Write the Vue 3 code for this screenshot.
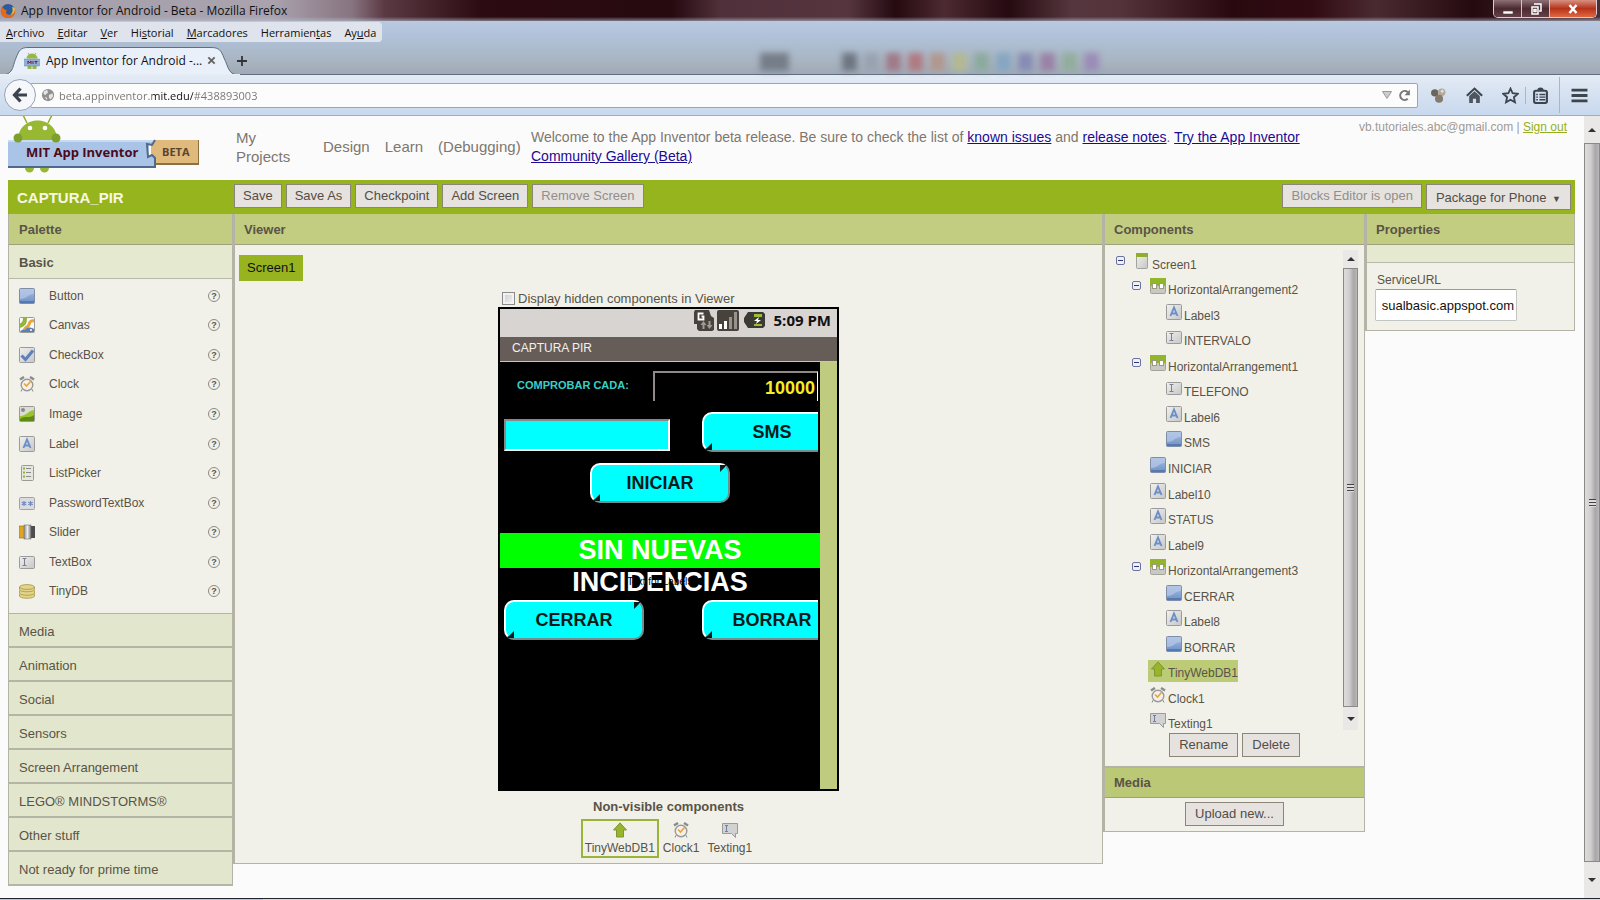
<template>
    <svg class="sprite" aria-hidden="true">
        <defs>
            <linearGradient id="gBlue" x1="0" y1="0" x2="0" y2="1">
                <stop offset="0" stop-color="#a9c0e2" />
                <stop offset="1" stop-color="#6d8fc4" />
            </linearGradient>
            <linearGradient id="gGrey" x1="0" y1="0" x2="1" y2="1">
                <stop offset="0" stop-color="#f1f1ef" />
                <stop offset="1" stop-color="#c6c6c6" />
            </linearGradient>
            <linearGradient id="gSlide" x1="0" y1="0" x2="1" y2="0">
                <stop offset="0" stop-color="#8c8c8c" />
                <stop offset="0.5" stop-color="#ececec" />
                <stop offset="1" stop-color="#777" />
            </linearGradient>
        </defs>
        <symbol id="i-button" viewBox="0 0 16 16">
            <rect x="0.5" y="0.5" width="15" height="15" rx="1" fill="url(#gBlue)" stroke="#7f8da6" />
            <path d="M1 1h14v5C9 6 8 11 1 11z" fill="#b6c9e8" opacity="0.7" />
            <path d="M1 13h14v2H1z" fill="#5579b5" />
        </symbol>
        <symbol id="i-canvas" viewBox="0 0 16 16">
            <rect x="0.5" y="0.5" width="15" height="15" rx="1" fill="#fbfaf4" stroke="#9b9b96" />
            <path d="M5 1c0 4-1 5-4 7M7 1c0 5-1 7-6 9" stroke="#8db33a" stroke-width="2" fill="none" />
            <path d="M15 4c-5-1-4 3-6 5s-3 1-4 5" stroke="#eaa23c" stroke-width="3" fill="none" />
            <path d="M1 15c2-4 5-1 6-3s5-2 8 0v3z" fill="#5a7fbb" />
            <circle cx="12" cy="13" r="1" fill="#fff" />
        </symbol>
        <symbol id="i-check" viewBox="0 0 16 16">
            <rect x="0.5" y="0.5" width="15" height="15" rx="1" fill="url(#gGrey)" stroke="#9b9b9b" />
            <path d="M2.500 8.500L6.500 12.500L14 3.500" stroke="#5c7fc0" stroke-width="3" fill="none" />
        </symbol>
        <symbol id="i-clock" viewBox="0 0 16 16">
            <path d="M1 3.500L5 1M15 3.500L11 1" stroke="#8c8c8c" stroke-width="2.500" />
            <path d="M3.500 12.500L2 15.500M12.500 12.500L14 15.500" stroke="#8c8c8c" />
            <circle cx="8" cy="9" r="5.800" fill="#f4f1ea" stroke="#9a9a9a" stroke-width="1.400" />
            <path d="M5 7.500L7.500 10L11.500 5.500" stroke="#e8a33a" stroke-width="1.600" fill="none" />
        </symbol>
        <symbol id="i-image" viewBox="0 0 16 16">
            <rect x="0.500" y="0.500" width="15" height="15" rx="1" fill="#dcdcd6" stroke="#9b9b96" />
            <path d="M1 10C7 10 9 5 15 4v11H1z" fill="#9ac42c" />
            <path d="M1 13C6 9 10 13 15 9v6H1z" fill="#5f8a14" />
            <circle cx="4" cy="4" r="2" fill="#8a8a8a" />
        </symbol>
        <symbol id="i-label" viewBox="0 0 16 16">
            <rect x="0.500" y="0.500" width="15" height="15" rx="1" fill="url(#gGrey)" stroke="#9b9b9b" />
            <path d="M4.500 12L8 3.500L11.500 12M5.700 9.500h4.600" stroke="#6c8fc9" stroke-width="1.900" fill="none" />
        </symbol>
        <symbol id="i-list" viewBox="0 0 16 16">
            <rect x="2.500" y="0.500" width="12" height="15" rx="1" fill="#e6e6e0" stroke="#9b9b96" />
            <path d="M7 3.500h5M7 7.500h5M7 11.500h5" stroke="#8b8b8b" />
            <path d="M4 3.500h2M4 7.500h2M4 11.500h2" stroke="#8db33a" stroke-width="2" />
        </symbol>
        <symbol id="i-password" viewBox="0 0 16 16">
            <rect x="0.500" y="2.500" width="15" height="12" rx="1" fill="#d9dbdf" stroke="#a3a3a3" />
            <path d="M5 6v5M2.800 7.200l4.400 2.600M7.200 7.200L2.800 9.800M11.500 6v5M9.300 7.200l4.400 2.600M13.700 7.200L9.300 9.800" stroke="#6c87bd" stroke-width="1.100" />
        </symbol>
        <symbol id="i-slider" viewBox="0 0 16 16">
            <rect x="0" y="2" width="6" height="12" fill="#dda61c" stroke="#9a7410" stroke-width="0.600" />
            <rect x="11" y="2" width="5" height="12" fill="#4d4d4d" />
            <rect x="5" y="1" width="7" height="14" fill="url(#gSlide)" stroke="#666" stroke-width="0.500" />
        </symbol>
        <symbol id="i-textbox" viewBox="0 0 16 16">
            <rect x="0.500" y="2.500" width="15" height="12" rx="1" fill="url(#gGrey)" stroke="#9b9b9b" />
            <path d="M3.500 4.500h4M5.500 4.500v7M3.500 11.500h4" stroke="#7a7f95" />
        </symbol>
        <symbol id="i-tinydb" viewBox="0 0 16 16">
            <g fill="#e3d488" stroke="#a8964a" stroke-width="0.800">
                <path d="M0.500 11v2c0 3 15 3 15 0v-2" />
                <path d="M0.500 7.500v2.500c0 3 15 3 15 0V7.500" />
                <path d="M0.500 4v2.500c0 3 15 3 15 0V4" />
                <ellipse cx="8" cy="4" rx="7.500" ry="2.400" />
            </g>
        </symbol>
        <symbol id="i-screen" viewBox="0 0 16 16">
            <rect x="2.500" y="0.500" width="11" height="15" rx="1" fill="url(#gGrey)" stroke="#a3a39b" />
            <path d="M2 0h12v4H2z" fill="#8fae30" />
        </symbol>
        <symbol id="i-arrange" viewBox="0 0 16 16">
            <rect x="0.500" y="0.500" width="15" height="15" rx="1" fill="#c9c9c4" stroke="#a3a39b" />
            <path d="M0 0h16v8H0z" fill="#93b52a" />
            <rect x="2.500" y="5.500" width="4" height="5" fill="#fff" stroke="#9a9a80" />
            <rect x="9.500" y="5.500" width="4" height="5" fill="#fff" stroke="#9a9a80" />
        </symbol>
        <symbol id="i-webdb" viewBox="0 0 16 16">
            <path d="M8 0.800L14.500 8H11.500V15H4.500V8H1.500z" fill="#98b42a" stroke="#7f9636" />
        </symbol>
        <symbol id="i-texting" viewBox="0 0 16 16">
            <path d="M0.500 1.500h15v10h-2v4l-4-4h-9z" fill="#d2d2d2" stroke="#9b9b9b" />
            <path d="M3 3.500h3M4.500 3.500v6M3 9.500h3" stroke="#6f7fa8" />
        </symbol>
    </svg>

    <div class="window">
        <header class="chrome">
            <div class="titlebar">
                <svg class="firefox" viewBox="0 0 16 16">
                    <circle cx="8" cy="8" r="7" fill="#2b5c9e" />
                    <path d="M2 3c-3 5-1 12 6 12 5 0 8-4 7-9 0 3-2 6-5 6-4 0-5-3-3-5C4 7 3 5 2 3z" fill="#e5691b" />
                    <path d="M15 6c0 3-2 6-5 6 3-2 3-5 2-8 2 0 3 1 3 2z" fill="#f6b83c" />
                </svg>
                <span class="title">App Inventor for Android - Beta - Mozilla Firefox</span>
                <div class="win-controls">
                    <button aria-label="Minimizar"><svg viewBox="0 0 14 12"><path d="M2 8h10v3H2z" fill="#fff" stroke="#444" stroke-width="0.600" /></svg></button>
                    <button aria-label="Restaurar"><svg viewBox="0 0 14 12"><path d="M5 1h7v7h-2M3 4h6v7H3zM5 6.500h2v2H5z" fill="none" stroke="#fff" stroke-width="1.500" /></svg></button>
                    <button class="close" aria-label="Cerrar ventana"><svg viewBox="0 0 14 12"><path d="M3.500 2l7 8M10.500 2l-7 8" stroke="#fff" stroke-width="2.500" /></svg></button>
                </div>
            </div>

            <nav class="menubar">
                <button v-for="item in menu" :key="item.join('')">{{ item[0] }}<u>{{ item[1] }}</u>{{ item[2] }}</button>
            </nav>

            <div class="tabstrip">
                <div class="glass" aria-hidden="true">
                    <i class="glass-box"></i>
                    <i
                        v-for="color in swatches"
                        :key="color"
                        class="swatch"
                        :style="{ backgroundColor: color }"
                    ></i>
                </div>
                <svg class="tab-shape" viewBox="0 0 240 28" preserveAspectRatio="none">
                    <path d="M0 28C14 28 12 20 16 11C19 3 21 0.500 28 0.500H211C219 0.500 221 3 224 11C229 21 228 28 240 28z" fill="#e9f0f9" stroke="#5f6e82" />
                    <path d="M0 28H240" stroke="#e6edf6" stroke-width="2" />
                </svg>
                <div class="tab">
                    <svg class="favicon" viewBox="0 0 16 16">
                        <path d="M3 5a5 4 0 0 1 10 0zM4 13h3v3H4zM9 13h3v3H9zM4 0l1.500 2M12 0l-1.500 2" fill="#97b83c" stroke="#97b83c" />
                        <rect x="0.500" y="6" width="15" height="7" fill="#8fafd8" stroke="#6b84ab" stroke-width="0.500" />
                        <path d="M4 11V8l1.500 2L7 8v3M9 8v3M10.500 8.500h3M12 8.500V11" stroke="#713" stroke-width="0.900" fill="none" />
                    </svg>
                    <span>App Inventor for Android -...</span>
                    <button aria-label="Cerrar pestaña"><svg viewBox="0 0 10 10"><path d="M1.500 1.500l7 7M8.500 1.500l-7 7" stroke="#666" stroke-width="2.200" /></svg></button>
                </div>
                <button class="new-tab" aria-label="Nueva pestaña"><svg viewBox="0 0 12 12"><path d="M6 1v10M1 6h10" stroke="#333" stroke-width="1.800" /></svg></button>
            </div>

            <div class="navbar">
                <button class="back" aria-label="Atrás"><svg viewBox="0 0 16 16"><path d="M8.500 1.500L2.500 8l6 6.500M3 8h12" stroke="#3d444d" stroke-width="3.200" fill="none" /></svg></button>
                <div class="urlbar">
                    <svg class="globe" viewBox="0 0 16 16">
                        <circle cx="8" cy="8" r="7" fill="#8e8e8e" />
                        <path d="M3 4l4-2 1 3-3 3-2-1zM9 8l4-2 1 3-3 4-2-2zM4 10l3 1v3z" fill="#e4e4e4" />
                    </svg>
                    <input v-model="url" class="url" aria-label="Dirección" />
                    <svg class="drop" viewBox="0 0 10 8"><path d="M0.500 0.500h9L5 7.500z" fill="#ccc" stroke="#999" /></svg>
                    <svg class="reload" viewBox="0 0 14 14"><path d="M10.500 10.500a4.800 4.800 0 1 1 0-7" stroke="#777" stroke-width="2.200" fill="none" /><path d="M12.800 0.500v6.300H7z" fill="#777" /></svg>
                </div>
                <div class="tools">
                    <button aria-label="Complemento"><svg viewBox="0 0 16 16"><circle cx="4.500" cy="5.500" r="3.500" fill="#6b645c" /><circle cx="11" cy="5" r="3.600" fill="#b3aa9d" /><circle cx="8.500" cy="11" r="3.800" fill="#857a6c" /><circle cx="11.500" cy="4" r="1.300" fill="#e6e1d8" /></svg></button>
                    <button aria-label="Inicio"><svg viewBox="0 0 16 16"><path d="M0.800 8.200L8 1.500l7.200 6.700" stroke="#3d444d" stroke-width="2" fill="none" /><path d="M3 8.500L8 4l5 4.500V15H9.500v-4h-3v4H3z" fill="#4d555f" /></svg></button>
                    <button aria-label="Marcar"><svg viewBox="0 0 16 16"><path d="M8 1.500l2 4.400 4.800.5-3.600 3.200 1 4.800L8 12l-4.200 2.400 1-4.800L1.200 6.400 6 5.900z" fill="none" stroke="#3d444d" stroke-width="1.700" /></svg></button>
                    <button aria-label="Marcadores" class="split"><svg viewBox="0 0 16 16"><rect x="2" y="3.500" width="12" height="11.500" rx="1.500" fill="none" stroke="#3d444d" stroke-width="2" /><path d="M5 3.500a3 3 0 0 1 6 0z" fill="#3d444d" /><path d="M4 7h1.500M7 7h5.500M4 9.500h1.500M7 9.500h5.500M4 12h1.500M7 12h5.500" stroke="#3d444d" stroke-width="1.300" /></svg></button>
                    <button aria-label="Menú" class="menu-btn"><svg viewBox="0 0 16 16"><path d="M0.500 3h15M0.500 8h15M0.500 13h15" stroke="#3d444d" stroke-width="2.600" /></svg></button>
                </div>
            </div>
        </header>

        <div class="page">
            <main class="content">
                <div class="masthead">
                    <svg class="logo" viewBox="0 0 191 59" role="img" aria-label="MIT App Inventor Beta">
                        <path d="M15 -1l4 8M44 -1l-4 8" stroke="#8fae36" stroke-width="1.500" />
                        <path d="M10 24C10 -2 49 -2 49 24z" fill="#97b832" />
                        <circle cx="22" cy="12" r="2.300" fill="#fff" />
                        <circle cx="37" cy="12" r="2.300" fill="#fff" />
                        <path d="M17 46h9v6a4.500 4.500 0 0 1-9 0zM32 46h9v6a4.500 4.500 0 0 1-9 0z" fill="#97b832" />
                        <path d="M143 24h48v24h-48z" fill="#dfba7c" />
                        <path d="M143 48h48V24" fill="none" stroke="#8c7040" stroke-width="2" />
                        <path d="M0 24h147l-2 4-4 0-1 12 5-1 3 4v9H0z" fill="#a9c4e6" />
                        <path d="M0 25h146" stroke="#c6daf2" stroke-width="2" />
                        <path d="M0 51h147V42l-3-3-4 2-1-13 5 1 3-5" fill="none" stroke="#51698c" stroke-width="2" />
                        <circle cx="10" cy="22" r="4.500" fill="#7f9f2c" />
                        <circle cx="48" cy="22" r="4.500" fill="#7f9f2c" />
                        <text x="18" y="41" class="logo-name">MIT App Inventor</text>
                        <text x="154" y="40" class="logo-beta">BETA</text>
                    </svg>
                    <nav class="links">
                        <a href="#" class="my-projects">My Projects</a>
                        <a href="#">Design</a>
                        <a href="#">Learn</a>
                        <a href="#">(Debugging)</a>
                    </nav>
                    <p class="welcome">
                        Welcome to the App Inventor beta release. Be sure to check the list of
                        <a href="#">known issues</a> and <a href="#">release notes</a>.
                        <a href="#">Try the App Inventor Community Gallery (Beta)</a>
                    </p>
                    <p class="account">vb.tutoriales.abc@gmail.com | <a href="#">Sign out</a></p>
                </div>

                <div class="toolbar">
                    <h1>CAPTURA_PIR</h1>
                    <button class="btn">Save</button>
                    <button class="btn">Save As</button>
                    <button class="btn">Checkpoint</button>
                    <button class="btn">Add Screen</button>
                    <button class="btn" disabled>Remove Screen</button>
                    <button class="btn push" disabled>Blocks Editor is open</button>
                    <button class="btn package">Package for Phone <small>▼</small></button>
                </div>

                <div class="columns">
                    <section class="palette">
                        <h2>Palette</h2>
                        <h3>Basic</h3>
                        <ul class="palette-items">
                            <li v-for="item in basic" :key="item.name">
                                <svg class="icon"><use :href="'#i-' + item.icon" /></svg>
                                <span>{{ item.name }}</span>
                                <button class="help" :aria-label="'Help for ' + item.name">?</button>
                            </li>
                        </ul>
                        <button v-for="name in categories" :key="name" class="category">{{ name }}</button>
                    </section>

                    <section class="viewer">
                        <h2>Viewer</h2>
                        <button class="screen-tab">Screen1</button>
                        <div class="mock">
                            <label class="hidden-toggle">
                                <input v-model="showHidden" type="checkbox" />
                                Display hidden components in Viewer
                            </label>
                            <div class="phone">
                                <div class="phone-status">
                                    <svg class="status-3g" viewBox="0 0 21 21">
                                        <path d="M2 0h14l2 6 3 2v12l-2 1H6l-2-2v-5H1V2z" fill="#48423d" />
                                        <path d="M10.500 3.500h-5v6h5v-3h-2" fill="none" stroke="#fff" stroke-width="1.800" />
                                        <path d="M9.500 19v-4H7.500l3-4 3 4h-2v4zM15.500 11v4h-2l3 4 3-4h-2v-4z" fill="#a09a94" />
                                    </svg>
                                    <svg class="status-signal" viewBox="0 0 22 21">
                                        <rect width="22" height="21" rx="2" fill="#48423d" />
                                        <path d="M2 14h3v5H2zM7 11h3v8H7z" fill="#fff" />
                                        <path d="M12 7h3v12h-3zM17 2h3v17h-3z" fill="#98928c" />
                                    </svg>
                                    <svg class="status-battery" viewBox="0 0 21 16">
                                        <path d="M4 0h15l2 2v12l-2 2H4l-2-3L0 10V6l2-3z" fill="#3c3a34" />
                                        <path d="M10 2h8v3h-8zM10 12h8v2h-8z" fill="#9bbd35" />
                                        <path d="M15 5l-5 4h3l-1 3 5-4h-3z" fill="#fff" />
                                    </svg>
                                    <b>5:09 PM</b>
                                </div>
                                <div class="phone-title">CAPTURA PIR</div>
                                <div class="phone-body">
                                    <div class="phone-screen">
                                        <div class="line interval">
                                            <label for="intervalo">COMPROBAR CADA:</label>
                                            <input id="intervalo" v-model="interval" />
                                        </div>
                                        <div class="line sms">
                                            <input v-model="phone" aria-label="TELEFONO" />
                                            <button class="app-btn">SMS</button>
                                        </div>
                                        <div class="line start">
                                            <button class="app-btn">INICIAR</button>
                                        </div>
                                        <div class="state">SIN NUEVAS INCIDENCIAS</div>
                                        <div class="label9">Text for Label9</div>
                                        <div class="line actions">
                                            <button class="app-btn">CERRAR</button>
                                            <button class="app-btn">BORRAR</button>
                                        </div>
                                    </div>
                                </div>
                            </div>
                            <h4>Non-visible components</h4>
                            <div class="nonvisible">
                                <div v-for="item in nonVisible" :key="item.name" class="nv" :class="{ active: item.name === selected }">
                                    <svg class="icon"><use :href="'#i-' + item.icon" /></svg>
                                    <span>{{ item.name }}</span>
                                </div>
                            </div>
                        </div>
                    </section>

                    <section class="components">
                        <h2>Components</h2>
                        <div class="tree-wrap">
                            <ul class="tree">
                                <li v-for="node in tree" :key="node.name" :class="'depth-' + node.depth">
                                    <button v-if="node.open" class="fold" :aria-label="'Collapse ' + node.name"></button>
                                    <span class="node" :class="{ selected: node.name === selected }">
                                        <svg class="icon"><use :href="'#i-' + node.icon" /></svg>
                                        <span>{{ node.name }}</span>
                                    </span>
                                </li>
                            </ul>
                            <div class="scrollbar">
                                <i class="arrow up"></i>
                                <div class="thumb"><i class="grip"></i></div>
                                <i class="arrow down"></i>
                            </div>
                        </div>
                        <div class="tree-actions">
                            <button class="btn">Rename</button>
                            <button class="btn">Delete</button>
                        </div>
                        <h2 class="media">Media</h2>
                        <div class="upload"><button class="btn">Upload new...</button></div>
                    </section>

                    <section class="properties">
                        <h2>Properties</h2>
                        <div class="prop-band"></div>
                        <div class="prop">
                            <label for="serviceUrl">ServiceURL</label>
                            <input id="serviceUrl" v-model="serviceUrl" />
                        </div>
                    </section>
                </div>
            </main>
            <div class="scrollbar page-scroll">
                <i class="arrow up"></i>
                <div class="thumb"><i class="grip"></i></div>
                <i class="arrow down"></i>
            </div>
        </div>
        <div class="taskbar"></div>
    </div>
</template>

<script setup>
import { ref } from "vue";

// before / access key / after
const menu = [
    ["", "A", "rchivo"],
    ["", "E", "ditar"],
    ["", "V", "er"],
    ["Hi", "s", "torial"],
    ["", "M", "arcadores"],
    ["Herramien", "t", "as"],
    ["Ay", "u", "da"],
];

const swatches = [
    "#6f7582", "#98a2b0", "#a07a88", "#b07a82", "#b1978f",
    "#b3b992", "#8caa9e", "#86a6c2", "#878bb4", "#9882a6",
    "#92ad9c", "#9a8cb8",
];

const basic = [
    { name: "Button", icon: "button" },
    { name: "Canvas", icon: "canvas" },
    { name: "CheckBox", icon: "check" },
    { name: "Clock", icon: "clock" },
    { name: "Image", icon: "image" },
    { name: "Label", icon: "label" },
    { name: "ListPicker", icon: "list" },
    { name: "PasswordTextBox", icon: "password" },
    { name: "Slider", icon: "slider" },
    { name: "TextBox", icon: "textbox" },
    { name: "TinyDB", icon: "tinydb" },
];

const categories = [
    "Media",
    "Animation",
    "Social",
    "Sensors",
    "Screen Arrangement",
    "LEGO® MINDSTORMS®",
    "Other stuff",
    "Not ready for prime time",
];

const tree = [
    { name: "Screen1", icon: "screen", depth: 0, open: true },
    { name: "HorizontalArrangement2", icon: "arrange", depth: 1, open: true },
    { name: "Label3", icon: "label", depth: 2 },
    { name: "INTERVALO", icon: "textbox", depth: 2 },
    { name: "HorizontalArrangement1", icon: "arrange", depth: 1, open: true },
    { name: "TELEFONO", icon: "textbox", depth: 2 },
    { name: "Label6", icon: "label", depth: 2 },
    { name: "SMS", icon: "button", depth: 2 },
    { name: "INICIAR", icon: "button", depth: 1 },
    { name: "Label10", icon: "label", depth: 1 },
    { name: "STATUS", icon: "label", depth: 1 },
    { name: "Label9", icon: "label", depth: 1 },
    { name: "HorizontalArrangement3", icon: "arrange", depth: 1, open: true },
    { name: "CERRAR", icon: "button", depth: 2 },
    { name: "Label8", icon: "label", depth: 2 },
    { name: "BORRAR", icon: "button", depth: 2 },
    { name: "TinyWebDB1", icon: "webdb", depth: 1 },
    { name: "Clock1", icon: "clock", depth: 1 },
    { name: "Texting1", icon: "texting", depth: 1 },
];

const nonVisible = tree.slice(-3);

const selected = ref("TinyWebDB1");
const url = ref("beta.appinventor.mit.edu/#438893003");
const showHidden = ref(false);
const interval = ref("10000");
const phone = ref("");
const serviceUrl = ref("sualbasic.appspot.com");
</script>

<style>
body {
    margin: 0;
    background: #fcfbfc;
}
</style>

<style scoped>
* {
    box-sizing: border-box;
}

button,
input {
    font: inherit;
    color: inherit;
    margin: 0;
}

button {
    padding: 0;
    border: 0;
    background: none;
    white-space: nowrap;
}

h1, h2, h3, h4, p, ul {
    margin: 0;
    padding: 0;
    list-style: none;
}

svg {
    display: block;
    flex: none;
}

.sprite {
    position: absolute;
    width: 0;
    height: 0;
}

.icon {
    width: 16px;
    height: 16px;
}

.window {
    display: flex;
    flex-direction: column;
    min-height: 100vh;
    font-family: "Liberation Sans", Arial, sans-serif;
    font-size: 13px;
    color: #5a5347;
}

/* browser chrome */
.chrome {
    font-family: "Open Sans", "Segoe UI", sans-serif;
    font-size: 12px;
    color: #111;
    background: linear-gradient(#b9c9e0 22px, #b0c2da 36px, #a9b5c2 60px, #9fa9b4 75px);
}

.titlebar {
    display: flex;
    align-items: center;
    height: 21px;
    background:
        linear-gradient(rgba(255, 255, 255, 0) 80%, rgba(178, 190, 210, 0.6)),
        linear-gradient(90deg, #a39fab 0, #aaa3ae 17%, #877480 22%, #5c3a44 24%, #2c0b11 30%, #260a10 42%, #50303a 45%, #56353f 53%, #250a10 56%, #4d2a32 59%, #250a10 63%, #56363e 67%, #55333b 70%, #29090f 77%, #310b12 82%, #4a2a31 86%, #250a10 92%, #4b2f36 100%);
}

.firefox {
    width: 16px;
    height: 16px;
}

.title {
    flex: 1;
    margin-left: 5px;
    line-height: 20px;
}

.win-controls {
    display: flex;
    align-self: flex-start;
    height: 18px;
    margin-right: 3px;
    border: 1px solid #d9cfd2;
    border-top: 0;
    border-radius: 0 0 5px 5px;
    overflow: hidden;
}

.win-controls button {
    display: grid;
    place-items: center;
    width: 28px;
    border-right: 1px solid #cfc3c6;
    background: linear-gradient(#8d7177, #4c2a31 50%, #644148);
}

.win-controls .close {
    width: 46px;
    border-right: 0;
    background: linear-gradient(#d79182, #b5331a 50%, #e0673f);
}

.win-controls svg {
    width: 14px;
    height: 12px;
}

.menubar {
    display: flex;
    gap: 13px;
    width: fit-content;
    height: 20px;
    margin: 1px 0 5px;
    padding: 0 6px;
    border-radius: 0 4px 4px 0;
    font-size: 11px;
    background: #dfe4ec;
}

.tabstrip {
    position: relative;
    display: flex;
    align-items: center;
    height: 28px;
    border-bottom: 1px solid #5f6e82;
}

/* colours of the window behind, seen through the glass */
.glass {
    position: absolute;
    top: 6px;
    left: 760px;
    display: flex;
    gap: 7px;
    height: 18px;
    filter: blur(3px);
}

.glass-box {
    width: 29px;
    margin-right: 46px;
    background: #757d88;
}

.swatch {
    width: 15px;
}

.tab-shape {
    position: absolute;
    left: 0;
    top: 0;
    width: 240px;
    height: 28px;
}

.tab {
    position: relative;
    display: flex;
    align-items: center;
    width: 216px;
    padding-left: 24px;
}

.favicon {
    width: 16px;
    height: 16px;
    margin-right: 6px;
}

.tab span {
    flex: 1;
    white-space: nowrap;
}

.tab button svg {
    width: 9px;
    height: 9px;
}

.new-tab {
    position: relative;
    margin-left: 20px;
}

.new-tab svg {
    width: 12px;
    height: 12px;
}

.navbar {
    display: flex;
    align-items: center;
    height: 41px;
    padding: 0 12px 0 4px;
    border-bottom: 1px solid #9fadc2;
    background: linear-gradient(#e3ebf5, #c8d8ed);
}

.back {
    z-index: 1;
    display: grid;
    place-items: center;
    width: 32px;
    height: 32px;
    border: 1px solid #96a2b4;
    border-radius: 50%;
    background: #f5f7fa;
}

.back svg {
    width: 16px;
    height: 16px;
}

.urlbar {
    display: flex;
    flex: 1;
    align-items: center;
    height: 25px;
    margin-left: -6px;
    padding: 0 6px 0 10px;
    border: 1px solid #98a5bb;
    border-radius: 2px;
    background: #fcfcfd;
}

.globe {
    width: 14px;
    height: 14px;
}

/* the host name stays dark, the rest of the address is greyed */
.url {
    flex: 1;
    height: 22px;
    margin-left: 4px;
    padding: 0;
    border: 0;
    outline: 0;
    font-size: 11px;
    color: transparent;
    background: linear-gradient(90deg, #77736f 93px, #111 93px, #111 134px, #77736f 134px);
    background-clip: text;
    -webkit-background-clip: text;
}

.drop {
    width: 10px;
    height: 8px;
}

.reload {
    width: 13px;
    height: 13px;
    margin-left: 6px;
}

.tools {
    display: flex;
    align-items: center;
    gap: 19px;
    margin-left: 12px;
}

.tools button {
    display: flex;
    align-items: center;
}

.tools svg {
    width: 17px;
    height: 17px;
}

.tools .split {
    margin-left: -13px;
    padding-left: 6px;
    border-left: 1px solid #aab6c8;
}

.tools .menu-btn {
    height: 36px;
    margin-left: -9px;
    padding-left: 11px;
    border-left: 1px solid #aab6c8;
}

/* page */
.page {
    display: flex;
    flex: 1;
}

.content {
    flex: 1;
    min-width: 0;
    padding: 0 9px 12px 8px;
}

.masthead {
    display: flex;
    height: 64px;
    font-size: 15px;
    line-height: 19px;
    color: #7d776d;
}

.logo {
    width: 191px;
    height: 59px;
}

.logo-name {
    font: bold 13px "Open Sans", sans-serif;
    fill: #4b0b1c;
}

.logo-beta {
    font: bold 11px "Open Sans", sans-serif;
    fill: #5a4630;
}

.links {
    display: flex;
    align-items: center;
    gap: 15px;
    width: 295px;
    margin-left: 37px;
    margin-bottom: 3px;
    flex: none;
}

.links a {
    color: inherit;
    text-decoration: none;
}

.my-projects {
    width: 72px;
    padding-right: 10px;
}

.welcome {
    flex: 0 1 816px;
    padding-top: 12px;
    font-size: 14px;
}

.welcome a {
    color: #1a0a94;
}

.account {
    margin: 2px 8px 0 auto;
    font-size: 12px;
    color: #a09a94;
    white-space: nowrap;
}

.account a {
    color: #94b01e;
}

.toolbar {
    display: flex;
    align-items: flex-start;
    gap: 4px;
    height: 34px;
    padding: 4px 4px 0 9px;
    background: #96b41d;
}

.toolbar h1 {
    width: 213px;
    font-size: 15px;
    line-height: 28px;
    color: #f6f8e4;
}

.btn {
    height: 24px;
    padding: 0 9px 2px;
    border: 1px solid #8b8679;
    background: #e5e2e0;
    color: #544d44;
}

.toolbar .btn {
    padding: 0 8px 2px;
}

.btn:disabled {
    color: #938e89;
}

.push {
    margin-left: auto;
}

.toolbar .package {
    height: 26px;
    padding: 0 9px;
}

.package small {
    margin-left: 2px;
    font-size: 9px;
}

.columns {
    display: grid;
    grid-template-columns: 225px 1fr 262px 210px;
    align-items: start;
}

.columns > section {
    border: 1px solid #b5b3a5;
    border-top: 0;
    background: #f1f1e9;
}

h2 {
    height: 31px;
    padding-left: 9px;
    border-bottom: 1px solid #a0a17c;
    font-size: 13px;
    line-height: 32px;
    background: #c2cd81;
}

.palette h2 {
    padding-left: 10px;
}

h3 {
    height: 34px;
    padding-left: 10px;
    border-bottom: 1px solid #b9b9ab;
    font-size: 13px;
    line-height: 35px;
    background: #e4e9d0;
}

.palette-items {
    display: flex;
    flex-direction: column;
    height: 334px;
    padding: 2px 12px 7px 10px;
    font-size: 12px;
}

.palette-items li {
    display: flex;
    flex: 1;
    align-items: center;
}

.palette-items span {
    flex: 1;
    margin-left: 14px;
}

.help {
    width: 12px;
    height: 12px;
    border: 1px solid #8e8a84;
    border-radius: 50%;
    font-size: 9px;
    font-weight: bold;
    line-height: 10px;
}

.category {
    display: block;
    width: 100%;
    height: 34px;
    padding: 2px 0 0 10px;
    border-bottom: 2px solid #b5b5a6;
    background: #e2e6cc;
    text-align: left;
}

.category:first-of-type {
    height: 35px;
    border-top: 1px solid #b5b5a6;
}

.columns > .palette {
    border-bottom: 0;
}

.columns > .viewer {
    border-left-width: 2px;
    min-height: 650px;
}

.columns > .components {
    border-left-width: 2px;
}

.columns > .properties {
    border-left-width: 2px;
}

.screen-tab {
    display: block;
    height: 26px;
    margin: 10px 4px 0;
    padding: 0 8px 2px;
    color: #111;
    background: #97b31f;
}

.mock {
    width: 341px;
    margin: 9px auto 0;
}

.hidden-toggle {
    display: flex;
    align-items: center;
    gap: 3px;
    height: 17px;
    margin-left: 4px;
    white-space: nowrap;
}

.hidden-toggle input {
    width: 13px;
    height: 13px;
    appearance: none;
    border: 1px solid #8b8b8b;
    background: linear-gradient(135deg, #c9c9c9, #f6f6f6);
    box-shadow: inset 0 0 0 2px #f2f2f2;
}

.phone {
    border: 2px solid #000;
    background: #000;
}

.phone-status {
    display: flex;
    align-items: center;
    justify-content: flex-end;
    height: 28px;
    padding-right: 6px;
    padding-bottom: 6px;
    background: #d8d4d2;
    color: #111;
}

.phone-status b {
    margin-left: 9px;
    font: bold 15px "Open Sans", sans-serif;
}

.status-3g {
    width: 21px;
    height: 21px;
}

.status-signal {
    width: 22px;
    height: 21px;
    margin: 0 5px 0 3px;
}

.status-battery {
    width: 21px;
    height: 16px;
}

.phone-title {
    height: 25px;
    padding-left: 12px;
    border-bottom: 1px solid #c9c4c0;
    font-size: 12px;
    line-height: 22px;
    color: #f3f1ef;
    background: #675d58;
}

.phone-body {
    padding-right: 17px;
    background: #bfcb7e;
}

.phone-screen {
    min-height: 427px;
    padding-top: 9px;
    background: #000;
}

.line {
    display: flex;
    margin-right: 2px;
    padding-left: 4px;
    overflow: hidden;
}

.line input {
    border-radius: 0;
    outline: 0;
}

.interval label {
    flex: none;
    width: 149px;
    padding-left: 13px;
    font-size: 11px;
    font-weight: bold;
    line-height: 28px;
    color: #38cfc8;
}

.interval input {
    width: 165px;
    height: 30px;
    padding: 3px 2px 0;
    border: solid #8f8a88;
    border-width: 2px 1px 0 2px;
    border-right-color: #fff;
    font-size: 18px;
    font-weight: bold;
    text-align: right;
    color: #f4ee22;
    background: #000;
}

.sms {
    align-items: flex-end;
    margin-top: 11px;
}

.sms input {
    flex: none;
    width: 166px;
    height: 32px;
    margin: 0 32px 1px 0;
    border: 2px solid #888;
    border-right-color: #fff;
    border-bottom-color: #fff;
    background: #0ff;
}

.app-btn {
    position: relative;
    flex: none;
    width: 140px;
    height: 40px;
    border: 2px solid #fff;
    border-right-color: #6f9090;
    border-bottom-color: #6f9090;
    border-radius: 10px;
    font-size: 18px;
    font-weight: bold;
    color: #0a1a1a;
    background: #0ff;
}

/* dark nicks where the light and shaded bevels meet */
.app-btn::before,
.app-btn::after {
    content: "";
    position: absolute;
    width: 7px;
    height: 7px;
    background: #0a1a1a;
}

.app-btn::before {
    top: 0;
    right: 1px;
    clip-path: polygon(0 0, 100% 0, 0 100%);
}

.app-btn::after {
    bottom: 0;
    left: 1px;
    clip-path: polygon(100% 0, 100% 100%, 0 100%);
}

.start {
    justify-content: center;
    margin: 11px 0 0;
    padding: 0;
}

.state {
    height: 35px;
    margin-top: 30px;
    padding: 1px 50px 0;
    font-size: 27px;
    font-weight: bold;
    line-height: 32px;
    text-align: center;
    color: #fff;
    background: #0f0;
}

.label9 {
    height: 32px;
    font-size: 10px;
    line-height: 27px;
    text-align: center;
    color: #000;
}

.actions {
    gap: 58px;
}

h4 {
    margin-top: 7px;
    font-size: 13px;
    line-height: 17px;
    text-align: center;
}

.nonvisible {
    display: flex;
    justify-content: center;
    margin-top: 4px;
    font-size: 12px;
}

.nv {
    display: flex;
    flex-direction: column;
    align-items: center;
    gap: 3px;
    padding: 1px 2px;
    border: 2px solid transparent;
}

.nv.active {
    border-color: #9ab43a;
}

.tree-wrap {
    display: flex;
    height: 485px;
    padding-right: 6px;
}

.tree {
    display: flex;
    flex: 1;
    flex-direction: column;
    height: 490px;
    padding-top: 5px;
    font-size: 12px;
}

.tree li {
    display: flex;
    flex: 1;
    align-items: center;
}

.depth-0 {
    padding-left: 11px;
}

.depth-1 {
    padding-left: 43px;
}

.depth-1:has(.fold) {
    padding-left: 27px;
}

.depth-2 {
    padding-left: 59px;
}

.fold {
    width: 9px;
    height: 9px;
    margin: 0 7px 5px 0;
    border: 1px solid #6b73a5;
    border-radius: 2px;
    background: linear-gradient(#34386b, #34386b) center / 5px 1px no-repeat, #eef0f8;
}

.node {
    display: flex;
    align-items: center;
    gap: 2px;
    height: 22px;
    padding-left: 2px;
}

.node .icon {
    margin-bottom: 4px;
}

.node span {
    padding-top: 4px;
}

.node.selected {
    background: #bccb76;
}

.scrollbar {
    display: flex;
    flex-direction: column;
    width: 15px;
    background: #eae8e6;
}

.tree-wrap .scrollbar {
    margin-top: 5px;
}

.arrow {
    display: grid;
    place-items: center;
    height: 18px;
}

.arrow::before {
    content: "";
    border: 4px solid transparent;
}

.up::before {
    margin-bottom: 4px;
    border-bottom-color: #333;
}

.down::before {
    margin-top: 4px;
    border-top-color: #333;
}

.tree-wrap .down {
    height: 23px;
}

.thumb {
    display: grid;
    flex: 1;
    place-items: center;
    border: 1px solid #8c8886;
    background: linear-gradient(90deg, #dedbdb, #d2cfd0 40%, #aba7a8 75%, #bab7b8);
}

.grip {
    width: 7px;
    height: 8px;
    background: repeating-linear-gradient(#444 0 1px, #ddd 1px 3px);
}

.tree-actions {
    display: flex;
    justify-content: center;
    gap: 4px;
    padding: 3px 0 9px;
}

h2.media {
    border-top: 2px solid #b5b3a5;
    height: 32px;
    background: #bbc976;
    line-height: 30px;
}

.upload {
    display: flex;
    justify-content: center;
    padding: 4px 0 5px;
}

.prop-band {
    height: 18px;
    border-bottom: 1px solid #b9b9ab;
    background: #e4e9d0;
}

.prop {
    padding: 9px 8px;
}

.prop label {
    display: block;
    padding-left: 2px;
    font-size: 12px;
    line-height: 17px;
}

.prop input {
    display: block;
    width: 142px;
    height: 32px;
    padding: 0 2px;
    border: 1px solid #c4c4c4;
    border-top-color: #999;
    border-radius: 2px;
    text-align: right;
    color: #111;
    background: #fff;
}

.page-scroll {
    width: 16px;
}

.page-scroll .arrow {
    height: 27px;
}

.page-scroll .down {
    height: 36px;
}

.taskbar {
    height: 2px;
    background: linear-gradient(90deg, #b7c3d8 263px, #d9dadd 263px);
    border-top: 1px solid #23262e;
}
</style>
